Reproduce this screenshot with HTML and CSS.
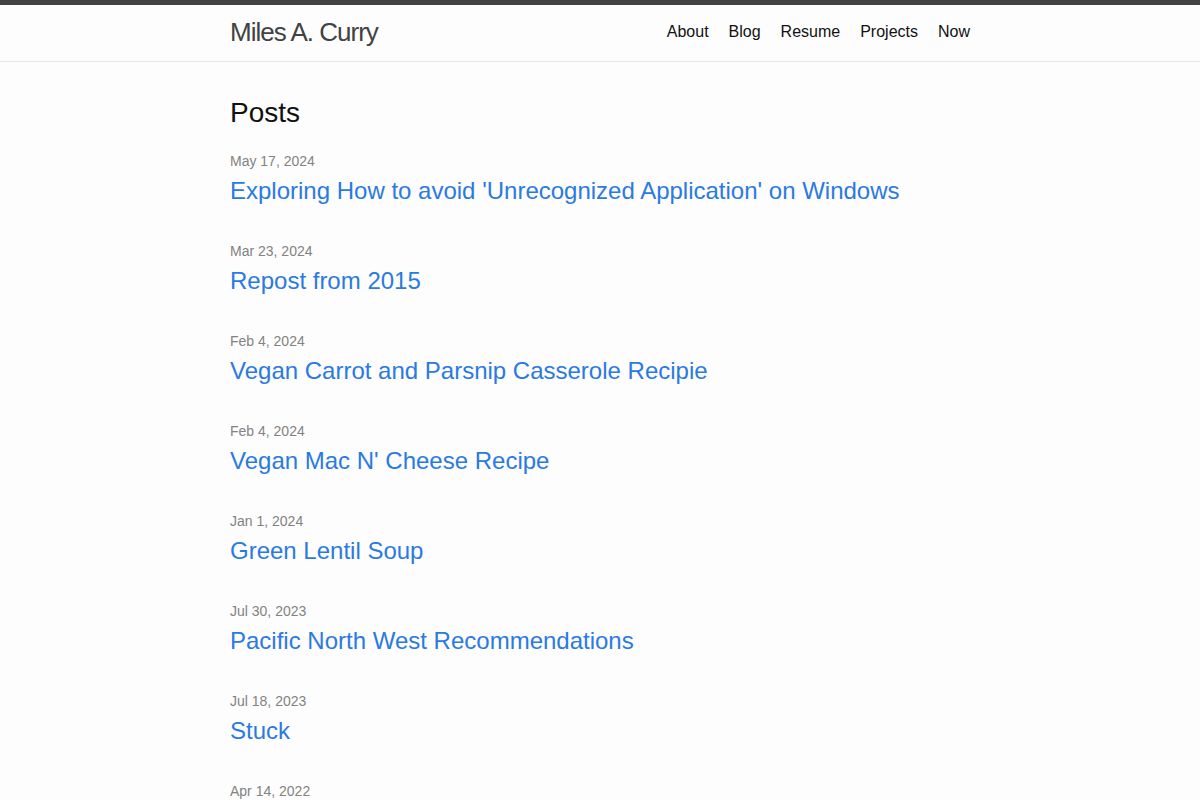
FILE: index.html
```html
<!DOCTYPE html>
<html lang="en">
<head>
    <meta charset="UTF-8">
    <title>Miles A. Curry</title>
    <link rel="stylesheet" href="styles.css">
</head>
<body>
    <header class="site-header">
        <div class="wrapper header-row">
            <a class="site-title" href="#">Miles A. Curry</a>
            <nav class="site-nav">
                <a class="page-link" href="#">About</a>
                <a class="page-link" href="#">Blog</a>
                <a class="page-link" href="#">Resume</a>
                <a class="page-link" href="#">Projects</a>
                <a class="page-link" href="#">Now</a>
            </nav>
        </div>
    </header>

    <main class="page-content">
        <div class="wrapper">
            <h2 class="post-list-heading">Posts</h2>
            <ul class="post-list">
                <li>
                    <span class="post-meta">May 17, 2024</span>
                    <h3><a class="post-link" href="#">Exploring How to avoid 'Unrecognized Application' on Windows</a></h3>
                </li>
                <li>
                    <span class="post-meta">Mar 23, 2024</span>
                    <h3><a class="post-link" href="#">Repost from 2015</a></h3>
                </li>
                <li>
                    <span class="post-meta">Feb 4, 2024</span>
                    <h3><a class="post-link" href="#">Vegan Carrot and Parsnip Casserole Recipie</a></h3>
                </li>
                <li>
                    <span class="post-meta">Feb 4, 2024</span>
                    <h3><a class="post-link" href="#">Vegan Mac N' Cheese Recipe</a></h3>
                </li>
                <li>
                    <span class="post-meta">Jan 1, 2024</span>
                    <h3><a class="post-link" href="#">Green Lentil Soup</a></h3>
                </li>
                <li>
                    <span class="post-meta">Jul 30, 2023</span>
                    <h3><a class="post-link" href="#">Pacific North West Recommendations</a></h3>
                </li>
                <li>
                    <span class="post-meta">Jul 18, 2023</span>
                    <h3><a class="post-link" href="#">Stuck</a></h3>
                </li>
                <li>
                    <span class="post-meta">Apr 14, 2022</span>
                    <h3><a class="post-link" href="#">Older Posts</a></h3>
                </li>
            </ul>
        </div>
    </main>
</body>
</html>
```

FILE: styles.css
```css
body {
    margin: 0;
    font-family: "Liberation Sans", Arial, sans-serif;
    font-size: 16px;
    line-height: 1.5;
    color: #111;
    background-color: #fdfdfd;
}
a {
    text-decoration: none;
}
.wrapper {
    max-width: 740px;
    margin: 0 auto;
    padding: 0 30px;
}
.site-header {
    border-top: 5px solid #424242;
    border-bottom: 1px solid #e8e8e8;
    min-height: 55.95px;
}
.header-row {
    display: flex;
    justify-content: space-between;
}
.site-title {
    font-size: 26px;
    font-weight: 300;
    line-height: 54px;
    letter-spacing: -1px;
    color: #424242;
}
.site-nav {
    display: flex;
    gap: 20px;
    line-height: 54px;
}
.page-link {
    color: #111;
}
.page-content {
    padding: 30px 0;
}
.post-list-heading {
    font-size: 28px;
    font-weight: 400;
    margin: 0 0 15px;
}
.post-list {
    list-style: none;
    margin: 0;
    padding: 0;
}
.post-list li {
    margin-bottom: 30px;
}
.post-list h3 {
    margin: 0;
    font-size: 24px;
    font-weight: 400;
}
.post-meta {
    font-size: 14px;
    color: #828282;
}
.post-link {
    display: block;
    color: #2a7ae2;
}
```
